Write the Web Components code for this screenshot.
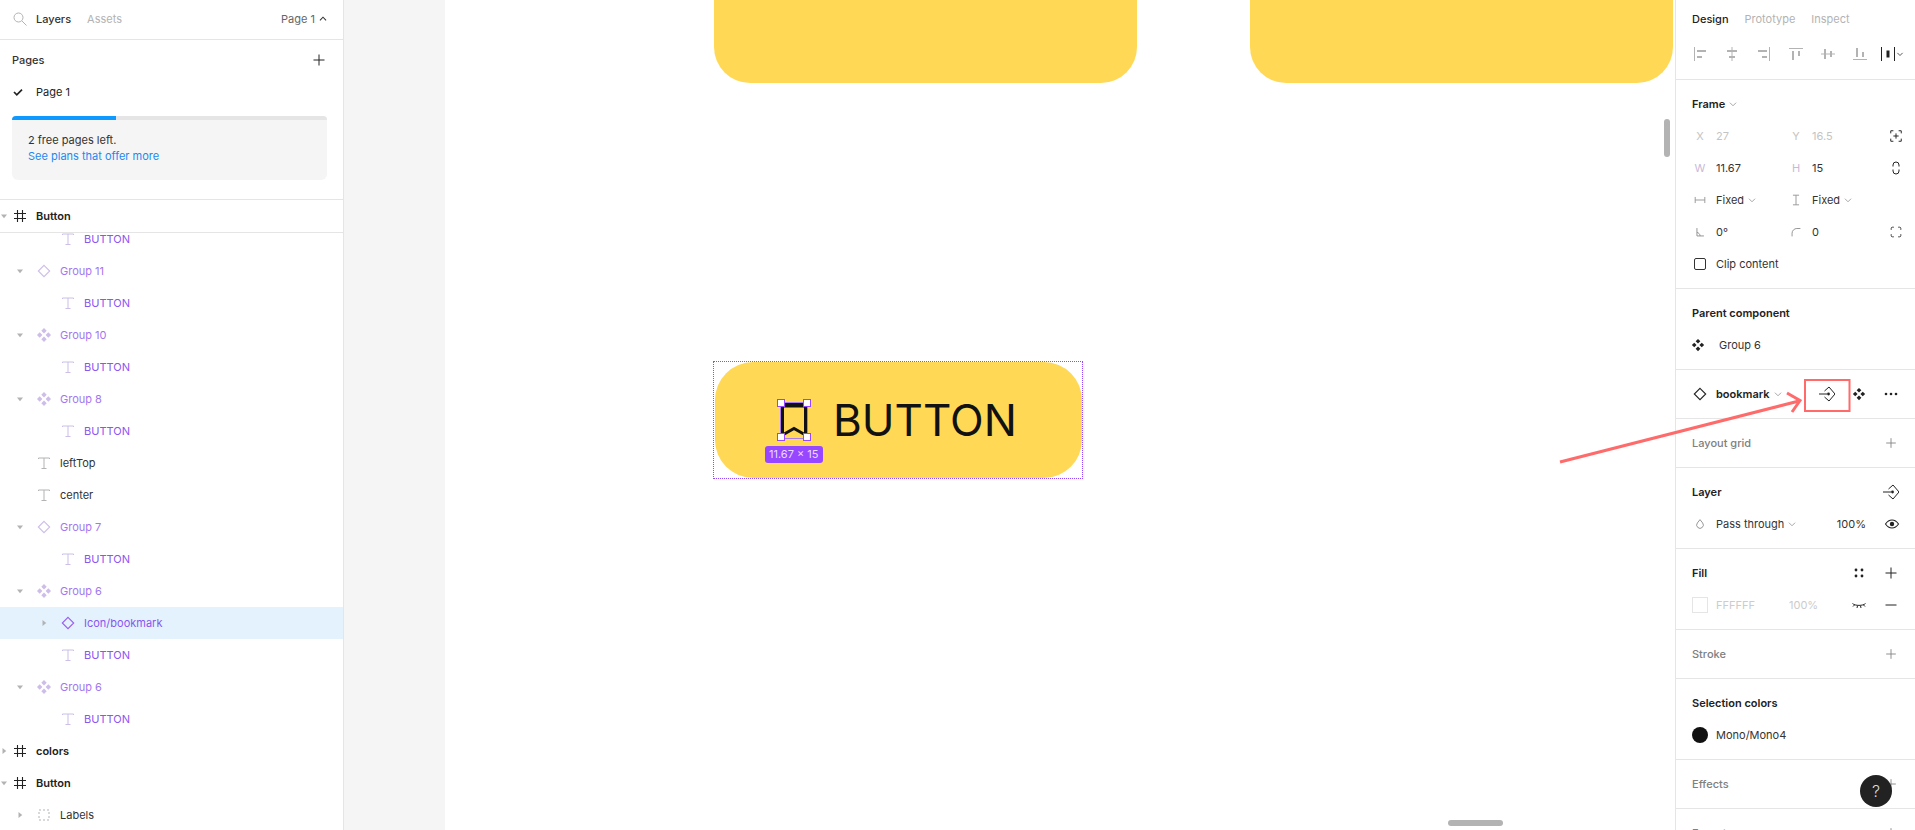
<!DOCTYPE html>
<html>
<head>
<meta charset="utf-8">
<title>Button</title>
<style>
    html, body { margin: 0; height: 100%; overflow: hidden; background: #fff; }
    body { font: 11px/16px Inter, "Noto Sans", sans-serif; color: #333; }
</style>
</head>
<body>
<figma-app>
    <layers-panel slot="left"></layers-panel>
    <canvas-view slot="canvas"></canvas-view>
    <design-panel slot="right"></design-panel>
</figma-app>

<script>
// icon shapes, all on a 16 box
const ICONS = {
    search: '<circle cx="6.5" cy="6.5" r="4.5" fill="none"/><path d="M10 10l4.5 4.5"/>',
    plus: '<path d="M8 2.5v11M2.5 8h11"/>',
    minus: '<path d="M2.5 8h11"/>',
    check: '<path d="M4 8l2.8 2.8L12 5.6" stroke-width="1.7" fill="none"/>',
    caretUp: '<path d="M4.5 9.5L8 6l3.5 3.5" fill="none" stroke-width="1.2"/>',
    chevDown: '<path d="M4.5 6.5L8 10l3.5-3.5" fill="none"/>',
    triDown: '<path d="M4 6h8l-4 5z" fill="currentColor" stroke="none"/>',
    triRight: '<path d="M6 4l5 4-5 4z" fill="currentColor" stroke="none"/>',
    hash: '<path d="M5.5 2v12M10.5 2v12M2 5.5h12M2 10.5h12" stroke-width="1.1"/>',
    text: '<path d="M2.5 4V3h11v1M8 3v10M5.5 13.5h5" fill="none"/>',
    diamond: '<path d="M8 2.3L13.7 8 8 13.7 2.3 8z" fill="none" stroke-width="1.1"/>',
    comp: '<path d="M8 1l2.700 2.700L8 6.400 5.300 3.700zM8 9.600l2.700 2.700L8 15l-2.700-2.700zM3.700 5.300L6.400 8l-2.700 2.700L1 8zM12.300 5.300L15 8l-2.700 2.700L9.600 8z" fill="currentColor" stroke="none"/>',
    dashed: '<rect x="3" y="3" width="10" height="10" fill="none" stroke-dasharray="2 2"/>',
    goto: '<path d="M0 8h8" /><circle cx="9.500" cy="8" r="1.400" fill="currentColor" stroke="none"/><path d="M5.500 5L10 1l6 7-6 7-4.500-4" fill="none"/>',
    dots: '<circle cx="3" cy="8" r="1.300" fill="currentColor" stroke="none"/><circle cx="8" cy="8" r="1.300" fill="currentColor" stroke="none"/><circle cx="13" cy="8" r="1.300" fill="currentColor" stroke="none"/>',
    styles: '<g fill="currentColor" stroke="none"><circle cx="5" cy="5" r="1.400"/><circle cx="11" cy="5" r="1.400"/><circle cx="5" cy="11" r="1.400"/><circle cx="11" cy="11" r="1.400"/></g>',
    eye: '<path d="M1.500 8C3.500 5 5.500 4 8 4s4.500 1 6.500 4c-2 3-4 4-6.500 4s-4.500-1-6.500-4z" fill="none" stroke-width="1.100"/><circle cx="8" cy="8" r="2.200" fill="currentColor" stroke="none"/>',
    lash: '<path d="M1.500 6.500C4 9 12 9 14.500 6.500M3.500 8L2 9.500M6.500 8.800L6 11M9.500 8.800L10 11M12.500 8L14 9.500" fill="none"/>',
    focus: '<path d="M2 5V2h3M11 2h3v3M14 11v3h-3M5 14H2v-3M8 5v6M5 8h6" fill="none" stroke-width="1.100"/>',
    constrain: '<path d="M5 6.500V5a3 3 0 0 1 6 0v1.500M5 9.500V11a3 3 0 0 0 6 0V9.500" fill="none"/>',
    corners: '<path d="M2.500 5.500V4A1.500 1.500 0 0 1 4 2.500h1.500M10.500 2.500H12A1.500 1.500 0 0 1 13.500 4v1.500M13.500 10.500V12a1.500 1.500 0 0 1-1.500 1.500h-1.500M5.500 13.500H4A1.500 1.500 0 0 1 2.500 12v-1.500" fill="none"/>',
    fixedH: '<path d="M2.500 4.500v7M13.500 4.500v7M2.500 8h11" stroke-width="1.100"/>',
    fixedV: '<path d="M4.500 2.500h7M4.500 13.500h7M8 2.500v11" stroke-width="1.100"/>',
    angle: '<path d="M4.500 3.500v9h8M4.500 8.500c2 .3 3.500 2 3.700 4" fill="none"/>',
    radius: '<path d="M3.500 13V9.500a5.500 5.500 0 0 1 5.500-5.500h4" fill="none"/>',
    drop: '<path d="M8 3l3 3.800a3.800 3.800 0 1 1-6 0z" fill="none"/>',
    alignL: '<path d="M2.500 1v14M5 4.500h9M5 10.500h5" /><path d="M5 5.500h9M5 11.500h5" />',
    alignC: '<path d="M8 1v14M3 4.500h10M5 10.500h6" /><path d="M3 5.500h10M5 11.500h6" />',
    alignR: '<path d="M13.500 1v14M2 4.500h9M6 10.500h5" /><path d="M2 5.500h9M6 11.500h5" />',
    alignT: '<path d="M1 2.500h14M4.500 5v9M10.500 5v5" /><path d="M5.500 5v9M11.500 5v5" />',
    alignM: '<path d="M1 8h14M4.500 3v10M10.500 5v6" /><path d="M5.500 3v10M11.500 5v6" />',
    alignB: '<path d="M1 13.500h14M4.500 2v9M10.500 6v5" /><path d="M5.500 2v9M11.500 6v5" />',
    distribute: '<path d="M1.500 1v14M14.500 1v14" /><path d="M8 4.500v7" stroke-width="3"/>'
};

// inline svg icon, picked by name
class FigmaIcon extends HTMLElement {
    connectedCallback() {
        const size = this.getAttribute('size') || 16;
        const color = this.getAttribute('color') || 'currentColor';
        this.attachShadow({ mode: 'open' }).innerHTML = `
        <style>
            :host { display: inline-flex; width: ${size}px; height: ${size}px; flex: none; color: ${color}; }
            svg { display: block; }
        </style>
        <svg width="${size}" height="${size}" viewBox="0 0 16 16" stroke="currentColor" stroke-width="1">${ICONS[this.getAttribute('name')]}</svg>`;
    }
}
customElements.define('figma-icon', FigmaIcon);

// outer shell: three columns, and the things that float over them
class FigmaApp extends HTMLElement {
    constructor() {
        super();
        this.attachShadow({ mode: 'open' }).innerHTML = `
        <style>
            :host {
                display: grid;
                grid-template-columns: 344px 1fr 240px;
                height: 830px;
                position: relative;
                overflow: hidden;
            }
            .arrow { position: absolute; left: 0; top: 0; pointer-events: none; }
            .help {
                position: absolute;
                left: 1860px;
                top: 775px;
                width: 32px;
                height: 32px;
                border-radius: 50%;
                background: #222;
                color: #d9d9d9;
                font-size: 16px;
                font-weight: 300;
                line-height: 32px;
                text-align: center;
            }
        </style>
        <slot name="left"></slot>
        <slot name="canvas"></slot>
        <slot name="right"></slot>
        <svg class="arrow" width="1915" height="830" fill="none" stroke="#ff6b6b">
            <rect x="1805" y="380" width="44.500" height="31" stroke-width="2"/>
            <path d="M1560 462L1799 401" stroke-width="3"/>
            <path d="M1787 393L1800 400.500L1792 412" stroke-width="3"/>
        </svg>
        <div class="help">?</div>`;
    }
}
customElements.define('figma-app', FigmaApp);

// one row of the layer tree
class LayerRow extends HTMLElement {
    constructor() {
        super();
        this.attachShadow({ mode: 'open' });
    }
    connectedCallback() {
        const depth = this.getAttribute('depth') || '0';
        const arrow = this.getAttribute('arrow');
        const icon = this.getAttribute('icon');
        const tone = this.getAttribute('tone') || 'plain';
        const left = { 0: 0, 1: 16, 2: 40 }[depth];
        const iconGap = depth == '0' ? 4 : 12;
        const arrowIcon = arrow ? `<figma-icon name="${arrow == 'down' ? 'triDown' : 'triRight'}" size="12"></figma-icon>` : '';
        this.shadowRoot.innerHTML = `
        <style>
            :host {
                display: flex;
                align-items: center;
                height: 32px;
                flex: none;
                white-space: nowrap;
                color: #333;
            }
            :host([tone="purple"]) { color: #8a55f0; }
            :host([tone="soft"]) { color: #a277ef; }
            :host([tone="frame"]) { color: #222; font-weight: 600; }
            :host([selected]) { background: #e3f2fd; }
            .arrow { margin-left: ${left - 2}px; width: 12px; height: 12px; color: #b3b3b3; margin-right: ${iconGap - 2}px; }
            .icon { width: 16px; height: 16px; margin-right: 8px; color: ${tone == 'plain' ? '#b3b3b3' : tone == 'frame' ? '#222' : '#cdbde8'}; }
            :host([selected]) .icon { color: #9a5cf0; }
        </style>
        <span class="arrow">${arrowIcon}</span>
        <span class="icon"><figma-icon name="${icon}"></figma-icon></span>
        <slot></slot>`;
    }
}
customElements.define('layer-row', LayerRow);

// left column: tabs, pages, layer tree
class LayersPanel extends HTMLElement {
    constructor() {
        super();
        const rows = [
            [2, '', 'text', 'purple', 'BUTTON'],
            [1, 'down', 'diamond', 'soft', 'Group 11'],
            [2, '', 'text', 'purple', 'BUTTON'],
            [1, 'down', 'comp', 'soft', 'Group 10'],
            [2, '', 'text', 'purple', 'BUTTON'],
            [1, 'down', 'comp', 'soft', 'Group 8'],
            [2, '', 'text', 'purple', 'BUTTON'],
            [1, '', 'text', 'plain', 'leftTop'],
            [1, '', 'text', 'plain', 'center'],
            [1, 'down', 'diamond', 'soft', 'Group 7'],
            [2, '', 'text', 'purple', 'BUTTON'],
            [1, 'down', 'comp', 'soft', 'Group 6'],
            [2, 'right', 'diamond', 'purple', 'Icon/bookmark', true],
            [2, '', 'text', 'purple', 'BUTTON'],
            [1, 'down', 'comp', 'soft', 'Group 6'],
            [2, '', 'text', 'purple', 'BUTTON'],
            [0, 'right', 'hash', 'frame', 'colors'],
            [0, 'down', 'hash', 'frame', 'Button'],
            [1, 'right', 'dashed', 'plain', 'Labels']
        ];
        const rowHtml = rows.map(r => `<layer-row depth="${r[0]}" arrow="${r[1]}" icon="${r[2]}" tone="${r[3]}" ${r[5] ? 'selected' : ''}>${r[4]}</layer-row>`).join('');

        this.attachShadow({ mode: 'open' }).innerHTML = `
        <style>
            :host {
                display: flex;
                flex-direction: column;
                height: 830px;
                border-right: 1px solid #e5e5e5;
                background: #fff;
                box-sizing: border-box;
                overflow: hidden;
            }
            .tabs {
                display: flex;
                align-items: center;
                height: 38px;
                padding: 0 16px 1px 12px;
                border-bottom: 1px solid #e5e5e5;
                flex: none;
            }
            .tabs .search { color: #b3b3b3; margin-right: 8px; }
            .tabs b { font-weight: 500; color: #333; margin-right: 16px; }
            .tabs .off { color: #b3b3b3; font-weight: 400; }
            .tabs .page { margin-left: auto; color: #666; display: flex; align-items: center; gap: 1px; }
            .tabs .page figma-icon { color: #333; margin-right: -3px; }
            .pages {
                height: 159px;
                border-bottom: 1px solid #e5e5e5;
                flex: none;
            }
            .pages-head { display: flex; align-items: center; justify-content: space-between; height: 40px; padding: 0 16px 0 12px; font-weight: 500; color: #333; }
            .page-row { display: flex; align-items: center; height: 24px; padding-left: 10px; color: #222; }
            .page-row figma-icon { margin-right: 10px; color: #222; }
            .quota {
                margin: 12px 16px 0 12px;
                height: 64px;
                background: #f5f5f5;
                border-radius: 4px 4px 6px 6px;
                overflow: hidden;
            }
            .meter { height: 4px; background: #e5e5e5; }
            .meter div { width: 104px; height: 4px; background: #0d99ff; }
            .quota p { margin: 12px 0 0 16px; color: #333; line-height: 16px; }
            .quota a { color: #1e88f0; display: block; }
            .sticky { border-bottom: 1px solid #e5e5e5; flex: none; }
            .tree { flex: 1; overflow: hidden; }
            .tree > div { margin-top: -10px; }
        </style>
        <div class="tabs">
            <figma-icon class="search" name="search"></figma-icon>
            <b>Layers</b>
            <span class="off">Assets</span>
            <span class="page">Page 1 <figma-icon name="caretUp" size="14"></figma-icon></span>
        </div>
        <div class="pages">
            <div class="pages-head">Pages <figma-icon name="plus" color="#222"></figma-icon></div>
            <div class="page-row"><figma-icon name="check"></figma-icon>Page 1</div>
            <div class="quota">
                <div class="meter"><div></div></div>
                <p>2 free pages left.<a>See plans that offer more</a></p>
            </div>
        </div>
        <layer-row class="sticky" depth="0" arrow="down" icon="hash" tone="frame">Button</layer-row>
        <div class="tree"><div>${rowHtml}</div></div>`;
    }
}
customElements.define('layers-panel', LayersPanel);

// yellow button as it stands on the canvas
class DemoButton extends HTMLElement {
    constructor() {
        super();
        this.attachShadow({ mode: 'open' }).innerHTML = `
        <style>
            :host {
                position: absolute;
                left: 268px;
                top: 361px;
                width: 370px;
                height: 118px;
                box-sizing: border-box;
                border: 1px dotted #9747ff;
            }
            .face {
                position: absolute;
                left: 1px;
                top: 0;
                right: 0;
                bottom: 0;
                background: #ffd955;
                border-radius: 38px;
            }
            .text {
                position: absolute;
                left: 118px;
                top: 31px;
                font-size: 44px;
                line-height: 54px;
                color: #111;
                white-space: nowrap;
            }
            .mark { position: absolute; left: 62px; top: 37px; }
            .tag {
                position: absolute;
                left: 50px;
                top: 84px;
                height: 17px;
                padding: 0 4px;
                border-radius: 3px;
                background: #9747ff;
                color: #eadcff;
                font-size: 11px;
                line-height: 17px;
                white-space: nowrap;
            }
        </style>
        <div class="face">
            <svg class="mark" width="34" height="42" viewBox="0 0 34 42" fill="none">
                <path d="M5.500 5h23v31l-11.500-6.500-11.500 6.500z" stroke="#111" stroke-width="3"/>
                <path d="M5 6h24" stroke="#111" stroke-width="5"/>
                <rect x="3.500" y="3.500" width="27" height="36" stroke="#a77df0"/>
                <g fill="#fff" stroke="#9747ff">
                    <rect x="0.500" y="0.500" width="7" height="7"/>
                    <rect x="26.500" y="0.500" width="7" height="7"/>
                    <rect x="0.500" y="34.500" width="7" height="7"/>
                    <rect x="26.500" y="34.500" width="7" height="7"/>
                </g>
            </svg>
            <span class="text">BUTTON</span>
            <span class="tag">11.67 × 15</span>
        </div>`;
    }
}
customElements.define('demo-button', DemoButton);

// the drawing area: gray gutter, then the white page with the artwork
class CanvasView extends HTMLElement {
    constructor() {
        super();
        this.attachShadow({ mode: 'open' }).innerHTML = `
        <style>
            :host {
                display: grid;
                grid-template-columns: 101px 1fr;
                height: 830px;
                overflow: hidden;
            }
            .gutter { background: #f5f5f5; }
            .stage { position: relative; background: #fff; overflow: hidden; }
            .card {
                position: absolute;
                top: -60px;
                width: 423px;
                height: 143px;
                background: #ffd955;
                border-radius: 36px;
            }
            .bar { position: absolute; background: #b3b3b3; border-radius: 3px; }
        </style>
        <div class="gutter"></div>
        <div class="stage">
            <div class="card" style="left: 269px"></div>
            <div class="card" style="left: 805px"></div>
            <demo-button></demo-button>
            <div class="bar" style="left: 1219px; top: 119px; width: 6px; height: 38px"></div>
            <div class="bar" style="left: 1003px; top: 820px; width: 55px; height: 6px"></div>
        </div>`;
    }
}
customElements.define('canvas-view', CanvasView);

// a block in the right column, divided from the next by a line
class PropSection extends HTMLElement {
    constructor() {
        super();
        this.attachShadow({ mode: 'open' }).innerHTML = `
        <style>
            :host {
                display: block;
                padding: 8px 0;
                border-bottom: 1px solid #e5e5e5;
            }
        </style>
        <slot></slot>`;
    }
}
customElements.define('prop-section', PropSection);

// one 32px line; the first slot is the content, "end" hugs the right side
class PropRow extends HTMLElement {
    constructor() {
        super();
        this.attachShadow({ mode: 'open' }).innerHTML = `
        <style>
            :host {
                display: flex;
                align-items: center;
                height: 32px;
                padding: 0 8px 0 12px;
                white-space: nowrap;
                color: #333;
            }
            :host([title-row]) { padding-left: 16px; }
            .end { margin-left: auto; display: flex; align-items: center; }
        </style>
        <slot></slot>
        <div class="end"><slot name="end"></slot></div>`;
    }
}
customElements.define('prop-row', PropRow);

// label + value cell, 96px wide like the x / y / w / h fields
class PropCell extends HTMLElement {
    constructor() {
        super();
        this.attachShadow({ mode: 'open' }).innerHTML = `
        <style>
            :host {
                display: flex;
                align-items: center;
                width: 96px;
                flex: none;
                color: #333;
            }
            :host([dim]) { color: #c4c4c4; }
            .lead {
                width: 24px;
                margin-right: 4px;
                display: flex;
                justify-content: center;
                color: #b3b3b3;
            }
            :host([dim]) .lead { color: #c4c4c4; }
        </style>
        <div class="lead"><slot name="lead"></slot></div>
        <slot></slot>`;
    }
}
customElements.define('prop-cell', PropCell);

// square slot for a right-hand icon
class IconButton extends HTMLElement {
    constructor() {
        super();
        this.attachShadow({ mode: 'open' }).innerHTML = `
        <style>
            :host {
                display: flex;
                align-items: center;
                justify-content: center;
                width: 32px;
                height: 32px;
                color: #222;
            }
            :host([soft]) { color: #808080; }
        </style>
        <slot></slot>`;
    }
}
customElements.define('icon-button', IconButton);

// right column
class DesignPanel extends HTMLElement {
    constructor() {
        super();
        const aligns = ['alignL', 'alignC', 'alignR', 'alignT', 'alignM', 'alignB'];
        this.attachShadow({ mode: 'open' }).innerHTML = `
        <style>
            :host {
                display: block;
                height: 830px;
                border-left: 1px solid #e5e5e5;
                box-sizing: border-box;
                overflow: hidden;
                background: #fff;
            }
            .tabs { display: flex; align-items: center; height: 38px; padding-left: 16px; gap: 16px; }
            .tabs b { font-weight: 500; color: #222; }
            .tabs span { color: #b3b3b3; font-weight: 400; }
            .aligns { display: flex; align-items: center; box-sizing: border-box; height: 42px; padding: 0 0 9px 8px; border-bottom: 1px solid #e5e5e5; }
            .aligns icon-button { color: #b3b3b3; }
            .aligns .last { color: #222; margin-left: 4px; display: flex; align-items: center; }
            .aligns .last figma-icon + figma-icon { margin-left: -2px; }
            .h { font-weight: 600; color: #222; }
            .h2 { font-weight: 500; color: #808080; }
            .chev { color: #999; margin-left: 1px; }
            .w { color: #c9b8d8; }
            .swatch { width: 16px; height: 16px; margin: 0 8px 0 4px; flex: none; box-sizing: border-box; border: 1px solid #e5e5e5; background: #fff; }
            .dot { width: 16px; height: 16px; margin: 0 8px 0 4px; flex: none; border-radius: 50%; background: #111; }
            .check { width: 12px; height: 12px; margin: 0 10px 0 6px; box-sizing: border-box; border: 1.500px solid #333; border-radius: 2px; flex: none; }
            .faint { color: #ccc; }
            .diamond { margin: 0 8px 0 4px; color: #222; }
            .comp { margin: 0 14px 0 3px; color: #222; }
        </style>
        <div class="tabs"><b>Design</b><span>Prototype</span><span>Inspect</span></div>
        <div class="aligns">
            ${aligns.map(a => `<icon-button><figma-icon name="${a}"></figma-icon></icon-button>`).join('')}
            <div class="last"><figma-icon name="distribute"></figma-icon><figma-icon name="chevDown" size="12"></figma-icon></div>
        </div>

        <prop-section>
            <prop-row title-row><span class="h">Frame</span><figma-icon class="chev" name="chevDown" size="14"></figma-icon></prop-row>
            <prop-row>
                <prop-cell dim><span slot="lead">X</span>27</prop-cell>
                <prop-cell dim><span slot="lead">Y</span>16.5</prop-cell>
                <icon-button slot="end"><figma-icon name="focus" size="14"></figma-icon></icon-button>
            </prop-row>
            <prop-row>
                <prop-cell><span slot="lead" class="w">W</span>11.67</prop-cell>
                <prop-cell><span slot="lead" class="w">H</span>15</prop-cell>
                <icon-button slot="end"><figma-icon name="constrain"></figma-icon></icon-button>
            </prop-row>
            <prop-row>
                <prop-cell><figma-icon slot="lead" name="fixedH" size="14" color="#999"></figma-icon>Fixed<figma-icon class="chev" name="chevDown" size="14"></figma-icon></prop-cell>
                <prop-cell><figma-icon slot="lead" name="fixedV" size="14" color="#999"></figma-icon>Fixed<figma-icon class="chev" name="chevDown" size="14"></figma-icon></prop-cell>
            </prop-row>
            <prop-row>
                <prop-cell><figma-icon slot="lead" name="angle" size="14" color="#888"></figma-icon>0°</prop-cell>
                <prop-cell><figma-icon slot="lead" name="radius" size="14" color="#888"></figma-icon>0</prop-cell>
                <icon-button slot="end"><figma-icon name="corners" size="14"></figma-icon></icon-button>
            </prop-row>
            <prop-row><span class="check"></span>Clip content</prop-row>
        </prop-section>

        <prop-section>
            <prop-row title-row><span class="h">Parent component</span></prop-row>
            <prop-row><figma-icon class="comp" name="comp" size="14"></figma-icon>Group 6</prop-row>
        </prop-section>

        <prop-section>
            <prop-row>
                <figma-icon class="diamond" name="diamond"></figma-icon><span class="h">bookmark</span><figma-icon class="chev" name="chevDown" size="14"></figma-icon>
                <icon-button slot="end"><figma-icon name="goto"></figma-icon></icon-button>
                <icon-button slot="end"><figma-icon name="comp" size="14"></figma-icon></icon-button>
                <icon-button slot="end"><figma-icon name="dots"></figma-icon></icon-button>
            </prop-row>
        </prop-section>

        <prop-section>
            <prop-row title-row><span class="h2">Layout grid</span><icon-button slot="end" soft><figma-icon name="plus" size="14"></figma-icon></icon-button></prop-row>
        </prop-section>

        <prop-section>
            <prop-row title-row><span class="h">Layer</span><icon-button slot="end"><figma-icon name="goto"></figma-icon></icon-button></prop-row>
            <prop-row>
                <prop-cell style="width: auto"><figma-icon slot="lead" name="drop" size="14" color="#888"></figma-icon>Pass through<figma-icon class="chev" name="chevDown" size="14"></figma-icon></prop-cell>
                <span slot="end" style="margin-right: 10px">100%</span>
                <icon-button slot="end" style="margin-right: -1px"><figma-icon name="eye"></figma-icon></icon-button>
            </prop-row>
        </prop-section>

        <prop-section>
            <prop-row title-row>
                <span class="h">Fill</span>
                <icon-button slot="end"><figma-icon name="styles"></figma-icon></icon-button>
                <icon-button slot="end"><figma-icon name="plus"></figma-icon></icon-button>
            </prop-row>
            <prop-row>
                <span class="swatch"></span><span class="faint">FFFFFF</span><span class="faint" style="margin-left: 34px">100%</span>
                <icon-button slot="end"><figma-icon name="lash"></figma-icon></icon-button>
                <icon-button slot="end"><figma-icon name="minus"></figma-icon></icon-button>
            </prop-row>
        </prop-section>

        <prop-section>
            <prop-row title-row><span class="h2">Stroke</span><icon-button slot="end" soft><figma-icon name="plus" size="14"></figma-icon></icon-button></prop-row>
        </prop-section>

        <prop-section>
            <prop-row title-row><span class="h">Selection colors</span></prop-row>
            <prop-row><span class="dot"></span>Mono/Mono4</prop-row>
        </prop-section>

        <prop-section>
            <prop-row title-row><span class="h2">Effects</span><icon-button slot="end" soft><figma-icon name="plus" size="14"></figma-icon></icon-button></prop-row>
        </prop-section>

        <prop-section>
            <prop-row title-row><span class="h2">Export</span><icon-button slot="end" soft><figma-icon name="plus" size="14"></figma-icon></icon-button></prop-row>
        </prop-section>`;
    }
}
customElements.define('design-panel', DesignPanel);
</script>
</body>
</html>
